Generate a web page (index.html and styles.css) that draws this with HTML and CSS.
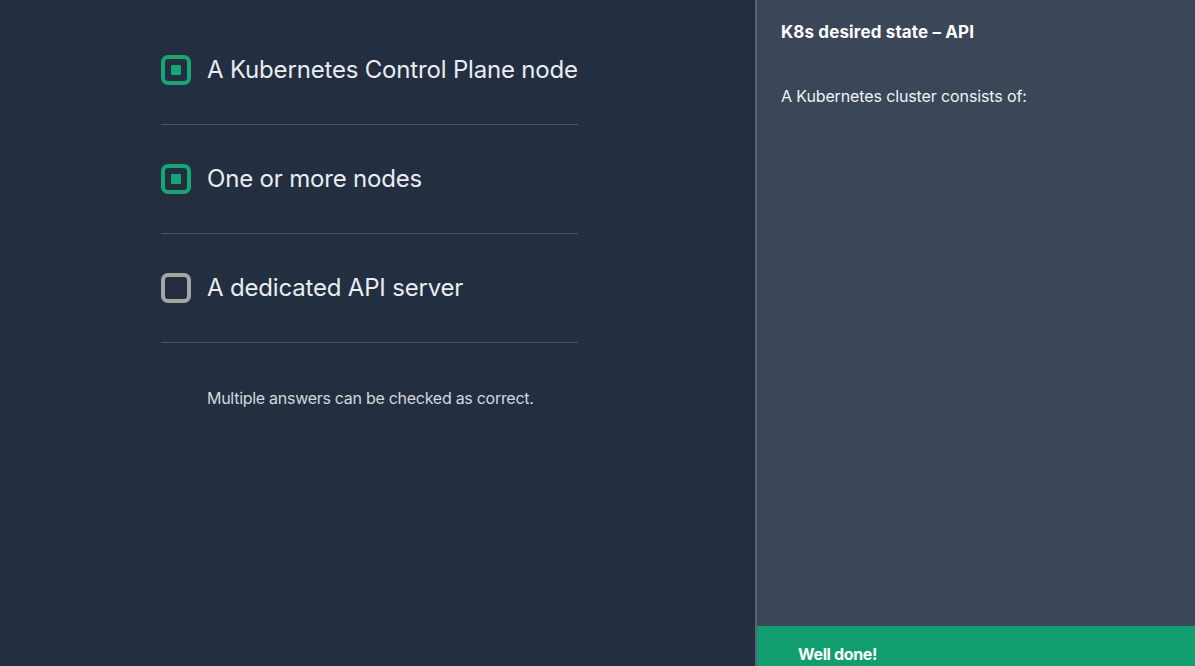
FILE: index.html
```html
<!DOCTYPE html>
<html lang="en">
<head>
<meta charset="utf-8">
<title>K8s desired state – API</title>
<link rel="stylesheet" href="styles.css">
</head>
<body>
<div class="layout">
  <main class="quiz">
    <div class="options">
      <div class="option">
        <span class="box checked"><span class="dot"></span></span>
        <span class="label">A Kubernetes Control Plane node</span>
      </div>
      <div class="option">
        <span class="box checked"><span class="dot"></span></span>
        <span class="label">One or more nodes</span>
      </div>
      <div class="option">
        <span class="box"></span>
        <span class="label">A dedicated API server</span>
      </div>
    </div>
    <p class="note">Multiple answers can be checked as correct.</p>
  </main>
  <aside class="side">
    <div class="side-body">
      <h1 class="title">K8s desired state – API</h1>
      <p class="question">A Kubernetes cluster consists of:</p>
    </div>
    <div class="banner">Well done!</div>
  </aside>
</div>
</body>
</html>
```
FILE: styles.css
```css
* { box-sizing: border-box; }
html, body { margin: 0; padding: 0; height: 100%; }
body {
  font-family: Inter, "Noto Sans", sans-serif;
  background: #232e41;
  color: #e8ebf0;
  overflow: hidden;
}
.layout {
  display: flex;
  height: 666px;
}
.quiz {
  width: 755px;
  background: #232e41;
  padding: 16px 0 0 161px;
}
.options {
  width: 417px;
}
.option {
  display: flex;
  align-items: center;
  gap: 16px;
  padding: 39px 0;
  border-bottom: 1px solid #4a5367;
}
.box {
  flex: none;
  width: 30px;
  height: 30px;
  border: 4px solid #a6a6a8;
  border-radius: 7px;
  display: flex;
  align-items: center;
  justify-content: center;
}
.box.checked { border-color: #17a673; }
.dot {
  width: 10px;
  height: 10px;
  background: #17a673;
  border-radius: 1px;
}
.label {
  font-size: 24px;
  line-height: 30px;
  color: #e9ecf1;
  letter-spacing: -0.18px;
}
.note {
  margin: 45px 0 0 46px;
  font-size: 16px;
  line-height: 20px;
  color: #d3d7de;
  letter-spacing: -0.28px;
}
.side {
  flex: 1;
  background: #3b4658;
  border-left: 2px solid #5b6377;
  display: flex;
  flex-direction: column;
}
.side-body {
  flex: 1;
  padding: 20px 24px 0 24px;
}
.title {
  margin: 0;
  font-size: 17px;
  line-height: 24px;
  font-weight: 700;
  color: #ffffff;
  letter-spacing: 0.13px;
}
.question {
  margin: 42px 0 0 0;
  font-size: 16px;
  line-height: 20px;
  color: #f1f3f6;
  letter-spacing: -0.12px;
}
.banner {
  height: 40px;
  background: #109e6e;
  padding: 18px 0 0 41px;
  font-size: 16px;
  font-weight: 700;
  line-height: 20px;
  color: #ffffff;
  letter-spacing: -0.35px;
}
```
